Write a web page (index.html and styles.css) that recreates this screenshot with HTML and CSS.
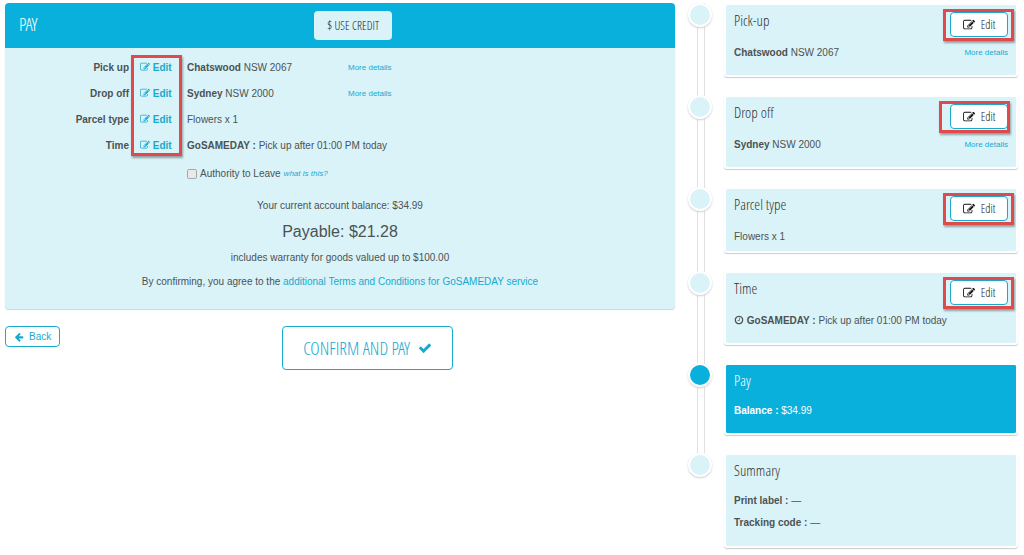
FILE: index.html
```
<!DOCTYPE html>
<html lang="en">
<head>
    <meta charset="UTF-8">
    <meta name="viewport" content="width=device-width, initial-scale=1.0">
    <title>Pay</title>
    <link rel="stylesheet" href="styles.css">
</head>
<body>

    <!-- Shared icons -->
    <svg class="icon-defs" aria-hidden="true">
        <symbol id="icon-edit" viewBox="0 0 1792 1792"><path d="M888 1184l116-116-152-152-116 116v56h96v96h56zm440-720q-16-16-33 1l-350 350q-17 17-1 33t33-1l350-350q17-17 1-33zm80 594v190q0 119-84.5 203.5t-203.5 84.5h-832q-119 0-203.5-84.5t-84.5-203.5v-832q0-119 84.5-203.5t203.5-84.5h832q63 0 117 25 15 7 18 23 3 17-9 29l-49 49q-14 14-32 8-23-6-45-6h-832q-66 0-113 47t-47 113v832q0 66 47 113t113 47h832q66 0 113-47t47-113v-126q0-13 9-22l64-64q15-15 35-7t20 29zm-96-738l288 288-672 672h-288v-288zm444 132l-92 92-288-288 92-92q28-28 68-28t68 28l152 152q28 28 28 68t-28 68z"/></symbol>
        <symbol id="icon-check" viewBox="0 0 1792 1792"><path d="M1671 566q0 40-28 68l-724 724-136 136q-28 28-68 28t-68-28l-136-136-362-362q-28-28-28-68t28-68l136-136q28-28 68-28t68 28l294 295 656-657q28-28 68-28t68 28l136 136q28 28 28 68z"/></symbol>
        <symbol id="icon-back" viewBox="0 0 1792 1792"><path d="M1664 896v128q0 53-32.5 90.5t-84.5 37.5h-704l293 294q38 36 38 90t-38 90l-75 76q-37 37-90 37-52 0-91-37l-651-652q-37-37-37-90 0-52 37-91l651-650q38-38 91-38 52 0 90 38l75 74q38 38 38 91t-38 91l-293 293h704q52 0 84.5 37.5t32.5 90.5z"/></symbol>
        <symbol id="icon-clock" viewBox="0 0 1792 1792"><path d="M1024 544v448q0 14-9 23t-23 9h-320q-14 0-23-9t-9-23v-64q0-14 9-23t23-9h224v-352q0-14 9-23t23-9h64q14 0 23 9t9 23zm416 352q0-148-73-273t-198-198-273-73-273 73-198 198-73 273 73 273 198 198 273 73 273-73 198-198 73-273zm224 0q0 209-103 385.5t-279.5 279.5-385.5 103-385.5-103-279.5-279.5-103-385.5 103-385.5 279.5-279.5 385.5-103 385.5 103 279.5 279.5 103 385.5z"/></symbol>
    </svg>

    <div class="page">
        <main>
            <section class="panel">
                <header class="panel-header">
                    <h1>PAY</h1>
                    <button type="button" class="credit-button"><b>$</b> USE CREDIT</button>
                </header>

                <div class="panel-body">
                    <div class="details">
                        <div class="detail-row">
                            <b class="label">Pick up</b>
                            <a class="edit-link" href="#pickup"><svg class="icon"><use href="#icon-edit"/></svg> Edit</a>
                            <span><b>Chatswood</b> NSW 2067</span>
                            <a class="more" href="#pickup-details">More details</a>
                        </div>
                        <div class="detail-row">
                            <b class="label">Drop off</b>
                            <a class="edit-link" href="#dropoff"><svg class="icon"><use href="#icon-edit"/></svg> Edit</a>
                            <span><b>Sydney</b> NSW 2000</span>
                            <a class="more" href="#dropoff-details">More details</a>
                        </div>
                        <div class="detail-row">
                            <b class="label">Parcel type</b>
                            <a class="edit-link" href="#parcel"><svg class="icon"><use href="#icon-edit"/></svg> Edit</a>
                            <span>Flowers x 1</span>
                        </div>
                        <div class="detail-row">
                            <b class="label">Time</b>
                            <a class="edit-link" href="#time"><svg class="icon"><use href="#icon-edit"/></svg> Edit</a>
                            <span class="wide"><b>GoSAMEDAY :</b> Pick up after 01:00 PM today</span>
                        </div>
                        <div class="detail-row">
                            <div class="authority">
                                <input type="checkbox" id="authority">
                                <label for="authority">Authority to Leave</label>
                                <a href="#authority-help">what is this?</a>
                            </div>
                        </div>
                        <div class="mark mark-column"></div>
                    </div>

                    <div class="totals">
                        <p>Your current account balance: $34.99</p>
                        <p class="payable">Payable: $21.28</p>
                        <p>includes warranty for goods valued up to $100.00</p>
                        <p>By confirming, you agree to the <a href="#terms">additional Terms and Conditions for GoSAMEDAY service</a></p>
                    </div>
                </div>
            </section>

            <div class="actions">
                <button type="button" class="back-button"><svg class="icon"><use href="#icon-back"/></svg>Back</button>
                <button type="button" class="confirm-button">CONFIRM AND PAY<svg class="icon"><use href="#icon-check"/></svg></button>
            </div>
        </main>

        <ol class="timeline">
            <li class="step" id="pickup">
                <span class="dot"></span>
                <div class="card">
                    <div class="card-head">
                        <h2>Pick-up</h2>
                        <div class="edit-wrap">
                            <button type="button" class="edit-button"><svg class="icon"><use href="#icon-edit"/></svg>Edit</button>
                            <div class="mark mark-button"></div>
                        </div>
                    </div>
                    <p><span><b>Chatswood</b> NSW 2067</span> <a class="more" href="#pickup-details">More details</a></p>
                </div>
            </li>
            <li class="step" id="dropoff">
                <span class="dot"></span>
                <div class="card">
                    <div class="card-head">
                        <h2>Drop off</h2>
                        <div class="edit-wrap">
                            <button type="button" class="edit-button"><svg class="icon"><use href="#icon-edit"/></svg>Edit</button>
                            <div class="mark mark-button mark-left"></div>
                        </div>
                    </div>
                    <p><span><b>Sydney</b> NSW 2000</span> <a class="more" href="#dropoff-details">More details</a></p>
                </div>
            </li>
            <li class="step" id="parcel">
                <span class="dot"></span>
                <div class="card card-short">
                    <div class="card-head">
                        <h2>Parcel type</h2>
                        <div class="edit-wrap">
                            <button type="button" class="edit-button"><svg class="icon"><use href="#icon-edit"/></svg>Edit</button>
                            <div class="mark mark-button"></div>
                        </div>
                    </div>
                    <p>Flowers x 1</p>
                </div>
            </li>
            <li class="step" id="time">
                <span class="dot"></span>
                <div class="card">
                    <div class="card-head">
                        <h2>Time</h2>
                        <div class="edit-wrap">
                            <button type="button" class="edit-button"><svg class="icon"><use href="#icon-edit"/></svg>Edit</button>
                            <div class="mark mark-button"></div>
                        </div>
                    </div>
                    <p><span><svg class="icon"><use href="#icon-clock"/></svg> <b>GoSAMEDAY :</b> Pick up after 01:00 PM today</span></p>
                </div>
            </li>
            <li class="step active">
                <span class="dot"></span>
                <div class="card">
                    <div class="card-head"><h2>Pay</h2></div>
                    <p><span><b>Balance :</b> $34.99</span></p>
                </div>
            </li>
            <li class="step">
                <span class="dot"></span>
                <div class="card">
                    <div class="card-head"><h2>Summary</h2></div>
                    <p><span><b>Print label :</b> —</span></p>
                    <p><span><b>Tracking code :</b> —</span></p>
                </div>
            </li>
        </ol>
    </div>

</body>
</html>
```
FILE: styles.css
```
* {
    box-sizing: border-box;
}
body {
    margin: 0;
    padding: 3px 6px 3px 5px;
    background: #fff;
    color: #4c5252;
    font-family: "Liberation Sans", Arial, sans-serif;
    font-size: 10px;
    line-height: 16px;
}
h1, h2, p, ol {
    margin: 0;
    padding: 0;
}
a {
    color: #18a9cf;
    text-decoration: none;
}
button {
    font-family: inherit;
    cursor: pointer;
}
.icon-defs {
    position: absolute;
    width: 0;
    height: 0;
}
.icon {
    width: 10px;
    height: 10px;
    fill: currentColor;
    vertical-align: -1px;
}
.page {
    display: grid;
    grid-template-columns: 670fr 330fr;
    gap: 13px;
}

/* Pay panel */
.panel {
    background: #daf3f9;
    border-radius: 4px;
    box-shadow: 0 1px 1px #c8d8dc;
}
.panel-header {
    display: flex;
    align-items: center;
    height: 45px;
    padding: 0 14px;
    background: #09b0db;
    color: #fff;
    border-radius: 4px 4px 0 0;
}
h1, h2, .credit-button, .confirm-button, .edit-button {
    font-family: "Open Sans Condensed Light", "Roboto Condensed", Lato, sans-serif;
    font-weight: 300;
}
h1 {
    width: 46%;
    font-size: 18px;
    padding-bottom: 4px;
}
.credit-button {
    height: 29px;
    padding: 0 13px;
    border: 0;
    border-radius: 4px;
    background: #daf3f9;
    color: #222;
    font-size: 12px;
}
.panel-body {
    padding: 7px 14px 19px;
}
.details {
    position: relative;
}
.detail-row {
    display: grid;
    grid-template-columns: 110px 48px 156px 1fr;
    column-gap: 5px;
    align-items: center;
    height: 26px;
}
.label {
    text-align: right;
}
.edit-link {
    padding-left: 6px;
    font-weight: bold;
    white-space: nowrap;
}
.more {
    font-size: 8px;
}
.wide {
    grid-column: 3 / 5;
}
.authority {
    grid-column: 3 / 5;
    display: flex;
    align-items: center;
    gap: 3px;
    padding-top: 4px;
}
.authority input {
    appearance: none;
    width: 10px;
    height: 10px;
    margin: 0;
    border: 1px solid #a5abad;
    border-radius: 2px;
    background: #e9e9e9;
}
.authority input:checked {
    background: #18a9cf;
}
.authority a {
    font-size: 8px;
    font-style: italic;
}
.totals {
    display: grid;
    gap: 8px;
    padding-top: 13px;
    text-align: center;
}
.payable {
    font-size: 16px;
    line-height: 20px;
}

/* Buttons under the panel */
.actions {
    display: flex;
    align-items: flex-start;
    padding-top: 17px;
}
.back-button, .confirm-button {
    display: flex;
    align-items: center;
    justify-content: center;
    border: 1px solid #18a9cf;
    border-radius: 4px;
    background: #fff;
    color: #18a9cf;
}
.back-button {
    height: 21px;
    padding: 0 8px;
    gap: 5px;
    font-size: 10px;
}
.confirm-button {
    height: 44px;
    margin: 0 auto;
    padding: 0 20px;
    gap: 8px;
    font-size: 18px;
}
.confirm-button .icon {
    width: 14px;
    height: 14px;
}

/* Timeline */
.timeline {
    list-style: none;
}
.step {
    position: relative;
    display: grid;
    grid-template-columns: 24px 1fr;
    gap: 12px;
    padding-bottom: 18px;
}
.step:last-child {
    padding-bottom: 0;
}
.step::before {
    content: "";
    position: absolute;
    top: 0;
    bottom: 0;
    left: 9px;
    width: 6px;
    border: 1px solid #e0e0e0;
    border-width: 0 1px;
}
.step:last-child::before {
    display: none;
}
.dot {
    position: relative;
    width: 24px;
    height: 24px;
    border: 2px solid #fff;
    border-radius: 50%;
    background: #daf3f9;
    box-shadow: 0 1px 2px #ccc;
}
.card {
    min-height: 74px;
    padding: 6px 8px 0;
    border: 2px solid #fff;
    border-radius: 3px;
    background: #daf3f9;
    background-clip: padding-box;
    box-shadow: 0 1px 1px #ccc;
}
.card-short {
    min-height: 66px;
}
.step:last-child .card {
    padding-bottom: 15px;
}
.card-head {
    display: flex;
    justify-content: space-between;
    min-height: 24px;
    margin-bottom: 8px;
}
h2 {
    color: #333;
    font-size: 15px;
    line-height: 18px;
}
.card p {
    display: flex;
    justify-content: space-between;
}
.card p + p {
    margin-top: 6px;
}
.active .card, .active .dot {
    background-color: #09b0db;
    color: #fff;
}
.active .card {
    min-height: 72px;
}
.active h2 {
    color: #fff;
}
.edit-wrap {
    position: relative;
    padding-top: 1px;
}
.edit-button {
    display: flex;
    align-items: center;
    justify-content: center;
    gap: 6px;
    width: 58px;
    height: 25px;
    padding: 0;
    border: 1px solid #18a9cf;
    border-radius: 4px;
    background: #fff;
    color: #111;
    font-size: 12px;
}
.edit-button .icon {
    width: 12px;
    height: 12px;
}

/* Red highlight frames */
.mark {
    position: absolute;
    border: 3px solid #df4b4c;
    box-shadow: 1px 2px 2px rgba(0,0,0,0.35);
    pointer-events: none;
}
.mark-column {
    top: 0;
    left: 112px;
    width: 51px;
    height: 101px;
}
.mark-button {
    top: -2px;
    right: -6px;
    width: 71px;
    height: 32px;
}
.mark-left {
    right: -2px;
}

@media (max-width: 800px) {
    .page {
        grid-template-columns: 1fr;
    }
}
```
